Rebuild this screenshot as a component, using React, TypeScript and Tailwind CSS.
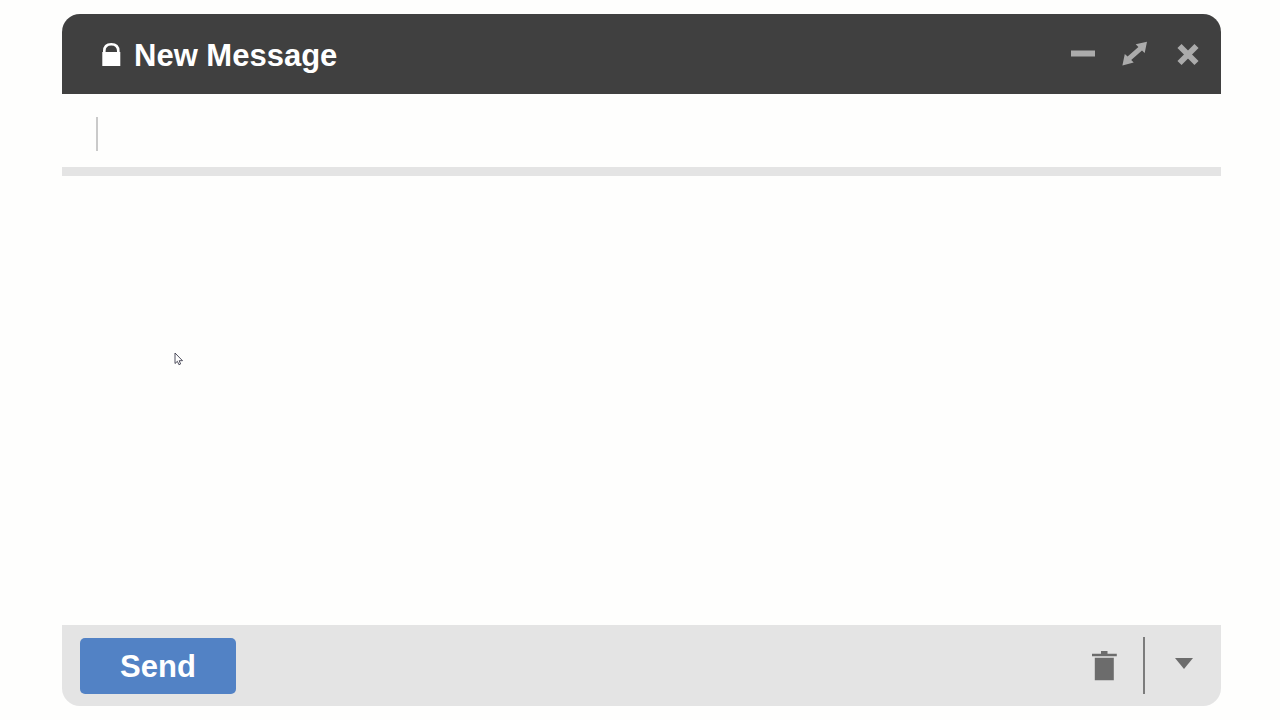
import React, { useState } from 'react';

const LockIcon: React.FC = () => (
    <svg width="20" height="24" viewBox="0 0 20 24" aria-hidden="true">
        <path d="M3.3 11V9C3.3 4.6 6 2.2 10.3 2.2S17.3 4.6 17.3 9v2" fill="none" stroke="#fff" strokeWidth="2.6" />
        <path d="M1.3 10h18v14h-18z" fill="#fff" />
    </svg>
);

const MinimizeIcon: React.FC = () => (
    <svg width="28" height="28" viewBox="0 0 28 28" fill="currentColor" aria-hidden="true">
        <path d="M1 10.5h24v6H1z" />
    </svg>
);

const ExpandIcon: React.FC = () => (
    <svg width="28" height="28" viewBox="0 0 28 28" fill="currentColor" aria-hidden="true">
        <path d="M25 1.8 22.7 12.9 20 10.6 9.2 20 11.7 22.6.4 25.4 2.8 14 5.6 16.4 16.4 6.9 13.7 4.2z" />
    </svg>
);

const CloseIcon: React.FC = () => (
    <svg width="28" height="28" viewBox="0 0 28 28" aria-hidden="true">
        <path d="M5.5 6 22.5 23M22.5 6 5.5 23" fill="none" stroke="currentColor" strokeWidth="5.8" />
    </svg>
);

const TrashIcon: React.FC = () => (
    <svg width="26" height="30" viewBox="0 0 26 30" fill="currentColor" aria-hidden="true">
        <path d="M9 0h6.5v2.8h9.3V5.3H0V2.8h9z" />
        <path d="M2.8 6.8h19v22.4h-19z" />
    </svg>
);

const ArrowDownIcon: React.FC = () => (
    <svg width="18" height="11" viewBox="0 0 18 11" fill="currentColor" aria-hidden="true">
        <path d="M0 0h18L9 11z" />
    </svg>
);

const Pointer: React.FC = () => (
    <svg
        className="pointer-events-none absolute left-[174px] top-[352px]"
        width="10"
        height="14"
        viewBox="0 0 10 14"
        aria-hidden="true"
    >
        <path
            d="M1 1v10.5l2.4-2.2 1.5 3.4 1.7-.7-1.4-3.3h3.3z"
            fill="#fff"
            stroke="#3c3c4c"
            strokeWidth="0.9"
        />
    </svg>
);

export default function App() {
    const [recipient, setRecipient] = useState<string>('');
    const [body, setBody] = useState<string>('');

    return (
        <div className="relative flex min-h-screen flex-col bg-[#fefefd] pt-[14px] pr-[59px] pb-[14px] pl-[62px] font-['Liberation_Sans',Arial,sans-serif]">
            <form
                className="flex flex-1 flex-col overflow-hidden rounded-[18px]"
                onSubmit={(e) => e.preventDefault()}
            >
                <header className="flex h-20 items-center justify-between bg-[#404040] pr-[19px] pl-[39px]">
                    <div className="flex items-center gap-[13px]">
                        <LockIcon />
                        <h1 className="pt-1 text-[31px] leading-10 font-bold text-white">New Message</h1>
                    </div>
                    <div className="flex items-center gap-6 text-[#ababab]">
                        <button type="button" aria-label="Minimize">
                            <MinimizeIcon />
                        </button>
                        <button type="button" aria-label="Expand">
                            <ExpandIcon />
                        </button>
                        <button type="button" aria-label="Close">
                            <CloseIcon />
                        </button>
                    </div>
                </header>

                {/* Recipient line */}
                <div className="border-b-[9px] border-[#e4e4e4] pt-[23px] pr-[34px] pb-4 pl-[34px]">
                    <input
                        type="text"
                        aria-label="Recipients"
                        value={recipient}
                        onChange={(e) => setRecipient(e.target.value)}
                        className="block h-[34px] w-full border-l-2 border-[#cacaca] pl-1 text-2xl outline-none"
                    />
                </div>

                <textarea
                    aria-label="Message body"
                    value={body}
                    onChange={(e) => setBody(e.target.value)}
                    className="w-full flex-1 resize-none px-[34px] py-6 text-2xl outline-none"
                />

                <footer className="flex items-center justify-between bg-[#e4e4e4] py-3 pr-7 pl-[18px]">
                    <button
                        type="submit"
                        className="h-14 w-[156px] rounded-[5px] bg-[#5282c5] pt-0.5 text-[31px] leading-10 font-bold text-white"
                    >
                        Send
                    </button>
                    <div className="flex items-center text-[#6c6c6c]">
                        <button type="button" aria-label="Discard draft">
                            <TrashIcon />
                        </button>
                        <div className="ml-[25px] h-[57px] w-[2px] bg-[#7c7c7c]" />
                        <button type="button" aria-label="More options" className="ml-[30px] pb-1">
                            <ArrowDownIcon />
                        </button>
                    </div>
                </footer>
            </form>
            <Pointer />
        </div>
    );
}
